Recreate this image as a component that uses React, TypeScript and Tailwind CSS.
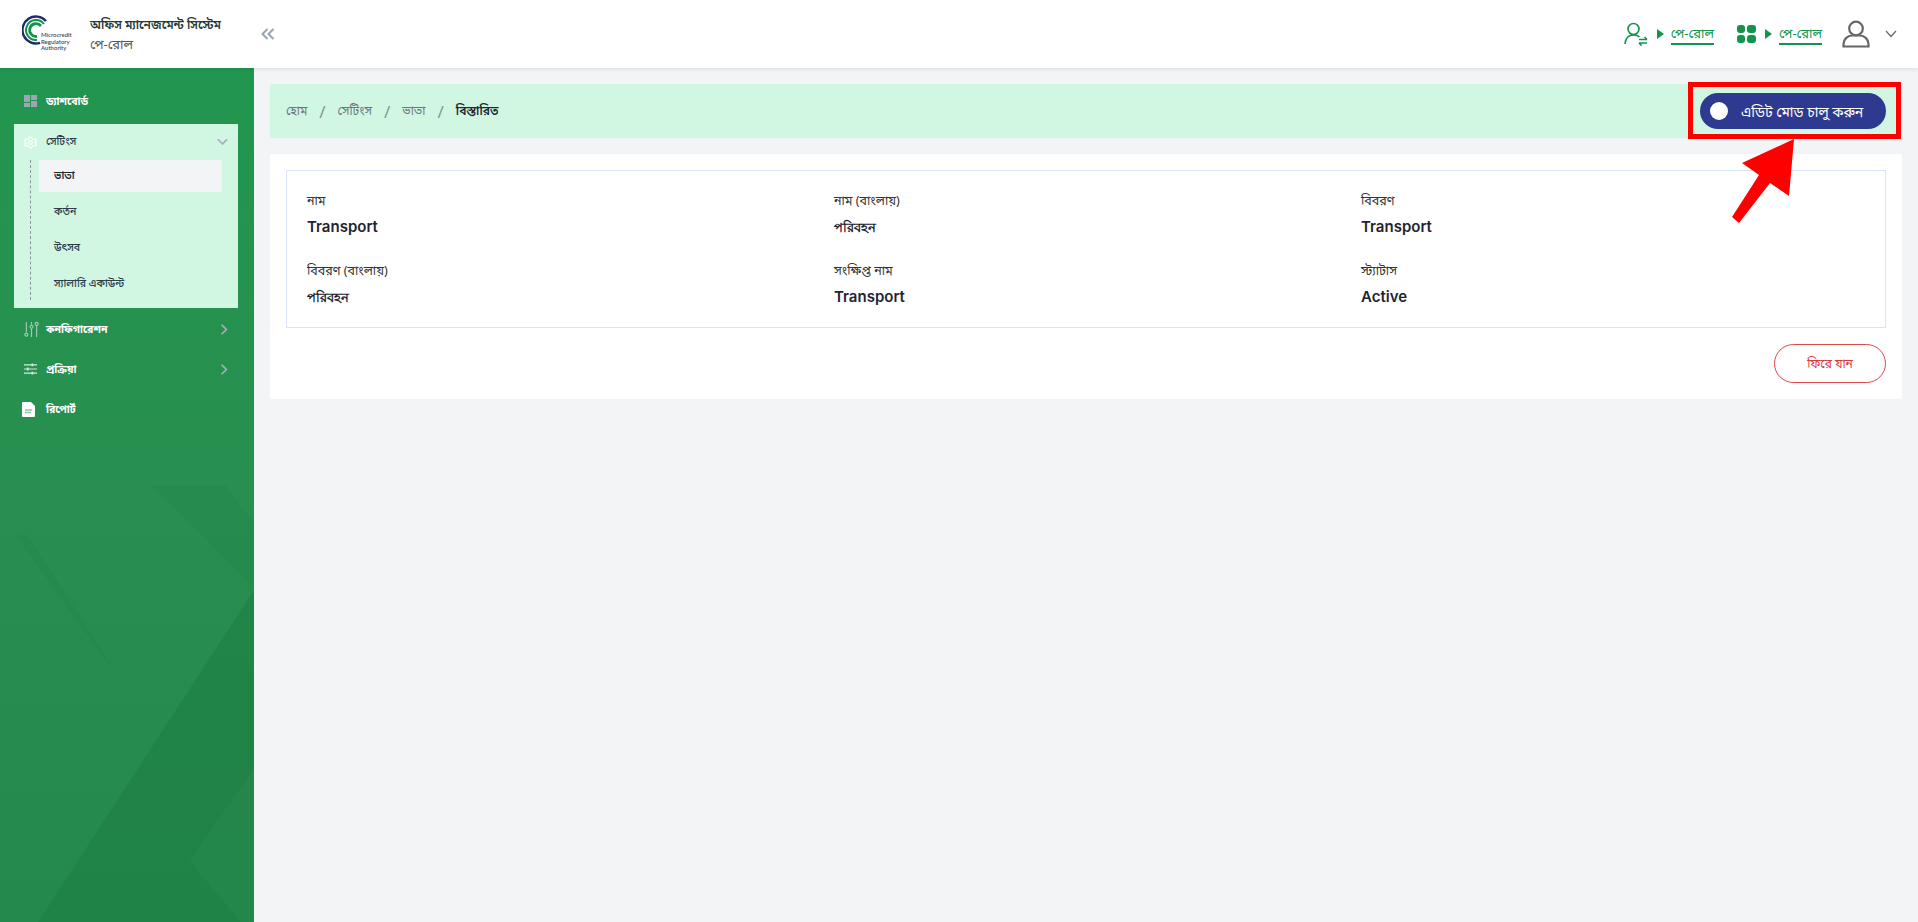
const font = "font-['Noto_Sans','Noto_Sans_Bengali','Lohit_Bengali','FreeSans',sans-serif]";

const Logo = () => (
  <div className="relative w-[50px] h-[40px]">
    <svg viewBox="0 0 50 40" className="absolute inset-0 w-full h-full" fill="none">
      <path d="M24 7 A13.500 13.500 0 1 0 18 28.900" stroke="#1c2a6b" strokeWidth="2.400" />
      <path d="M22 10 A10 10 0 1 0 15 26" stroke="#12944c" strokeWidth="2" />
      <path d="M19 12 A6.400 6.400 0 1 0 15 22.400" stroke="#12944c" strokeWidth="2.800" />
    </svg>
    <div className="absolute left-[19px] top-[18px] font-['Lato',sans-serif] text-[6px] leading-[6.500px] text-[#3f4a5c] font-semibold whitespace-nowrap">
      <div>Microcredit</div>
      <div>Regulatory</div>
      <div>Authority</div>
    </div>
  </div>
);

const PayrollLink = ({ icon }: { icon: React.ReactNode }) => (
  <div className="flex items-center">
    {icon}
    <svg viewBox="0 0 7 10" className="w-[7px] h-[10px] fill-[#12944c] ml-[9px] mr-[7px]">
      <path d="M0 0 L7 5 L0 10 Z" />
    </svg>
    <span className="text-[13px] leading-[18px] text-[#12944c] border-b-2 border-[#12944c] pb-[1px]">পে-রোল</span>
  </div>
);

const MenuRow = ({ icon, label, chevron }: { icon: React.ReactNode; label: string; chevron?: boolean }) => (
  <div className="h-10 flex items-center pl-[24px] pr-[26px] text-white text-[10.500px] font-bold">
    <span className="w-[22px] flex">{icon}</span>
    <span className="pt-[2px]">{label}</span>
    {chevron && (
      <svg viewBox="0 0 10 14" className="ml-auto w-[8px] h-[13px]" fill="none" stroke="#a9b0bd" strokeWidth="2">
        <path d="M2 1 L8 7 L2 13" />
      </svg>
    )}
  </div>
);

const Field = ({ label, value, bangla }: { label: string; value: string; bangla?: boolean }) => (
  <div>
    <div className="text-[12.500px] leading-[20px] text-[#333]">{label}</div>
    <div className={`mt-[6px] leading-[20px] font-semibold text-[#1f2430] font-['Inter','Noto_Sans',sans-serif] ${bangla ? 'text-[13px]' : 'text-[15px]'}`}>{value}</div>
  </div>
);

const Slash = () => <span className="mx-[12px] text-[17px] leading-none text-[#8a949e]">/</span>;

export default function App() {
  return (
    <div className={`relative h-[922px] w-[1918px] overflow-hidden flex flex-col bg-[#f3f4f6] ${font}`}>
      <header className="relative z-10 h-[68px] shrink-0 bg-white shadow-[0_1px_4px_rgba(0,0,0,0.1)] flex items-center pl-[22px] pr-[21px]">
        <Logo />
        <div className="ml-[18px] w-[130px] whitespace-nowrap">
          <div className="text-[12px] leading-[18px] font-semibold text-[#1f3a3a]">অফিস ম্যানেজমেন্ট সিস্টেম</div>
          <div className="mt-[1px] text-[13px] leading-[18px] text-[#555]">পে-রোল</div>
        </div>
        <svg viewBox="0 0 14 12" className="ml-[41px] w-[14px] h-[12px]" fill="none" stroke="#9aa3b2" strokeWidth="2">
          <path d="M6.500 1 L1.500 6 L6.500 11 M12.500 1 L7.500 6 L12.500 11" />
        </svg>
        <div className="ml-auto flex items-center">
          <PayrollLink
            icon={
              <svg viewBox="0 0 24 24" className="w-[24px] h-[24px]" fill="none" stroke="#12944c" strokeWidth="1.600">
                <circle cx="9.500" cy="7" r="5.500" />
                <path d="M1 22 C1.500 16 5 13 9.500 13 C12 13 14 13.500 15.500 15" />
                <path d="M15 17.500 H23 M20.500 15 L23 17.500 M23 21 H15 M17.500 23.500 L15 21" />
              </svg>
            }
          />
          <div className="w-[23px]" />
          <PayrollLink
            icon={
              <div className="grid grid-cols-2 gap-[2px] w-[19px]">
                <span className="h-[8px] rounded-[3px] bg-[#12944c]" />
                <span className="h-[8px] rounded-[3px] bg-[#12944c]" />
                <span className="h-[8px] rounded-[3px] bg-[#12944c]" />
                <span className="h-[8px] rounded-[3px] bg-[#12944c]" />
              </div>
            }
          />
          <svg viewBox="0 0 28 28" className="ml-[20px] w-[28px] h-[28px]" fill="none" stroke="#666" strokeWidth="2.200">
            <circle cx="14" cy="8.500" r="6.800" />
            <path d="M1.500 26.500 V24 C1.500 19 6 15.500 10 15.500 H18 C22 15.500 26.500 19 26.500 24 V26.500 Z" />
          </svg>
          <svg viewBox="0 0 12 8" className="ml-[15px] w-[12px] h-[8px]" fill="none" stroke="#666" strokeWidth="1.200">
            <path d="M1 1 L6 6.500 L11 1" />
          </svg>
        </div>
      </header>

      <div className="flex flex-1 min-h-0">
        <aside className="relative w-[254px] shrink-0 bg-gradient-to-b from-[#21964f] via-[#288f50] to-[#248a4c] pt-[13px]">
          <svg viewBox="0 0 254 854" preserveAspectRatio="none" className="absolute inset-0 w-full h-full">
            <polygon points="254,522 38,854 254,854" fill="#1c7a41" opacity="0.45" />
            <polygon points="254,700 190,793 254,870" fill="#2a9055" opacity="0.3" />
            <polygon points="15,467 28,467 120,610 100,585" fill="#1c7a41" opacity="0.12" />
            <polygon points="150,417 225,417 254,455 254,520" fill="#1c7a41" opacity="0.15" />
          </svg>
          <div className="relative">
            <div className="mb-[3px]">
              <MenuRow
                label="ড্যাশবোর্ড"
                icon={
                  <div className="grid grid-cols-2 gap-[1px] w-[13px] h-[12px]">
                    <span className="h-[7px] bg-[#9fa4b4]" />
                    <span className="h-[5px] bg-[#9fa4b4]" />
                    <span className="h-[4px] bg-[#9fa4b4]" />
                    <span className="h-[6px] -mt-[2px] bg-[#9fa4b4]" />
                  </div>
                }
              />
            </div>
            <div className="relative ml-[14px] mr-[16px] h-[184px] bg-[#d1f7e2] text-[#333]">
              <div className="h-[36px] flex items-center pl-[10px] pr-[10px] text-[10.500px] font-medium text-[#2a3b4a]">
                <svg viewBox="0 0 24 24" className="w-[13px] h-[13px] mr-[9px]" fill="none" stroke="#fff" strokeWidth="2">
                  <circle cx="12" cy="12" r="3.500" />
                  <path d="M10 2 H14 L15 5 L18 6.500 L21 5.500 L23 9 L20.500 11 V13 L23 15 L21 18.500 L18 17.500 L15 19 L14 22 H10 L9 19 L6 17.500 L3 18.500 L1 15 L3.500 13 V11 L1 9 L3 5.500 L6 6.500 L9 5 Z" />
                </svg>
                <span>সেটিংস</span>
                <svg viewBox="0 0 14 10" className="ml-auto w-[11px] h-[8px]" fill="none" stroke="#a9b0bd" strokeWidth="2.200">
                  <path d="M1 1.500 L7 7.500 L13 1.500" />
                </svg>
              </div>
              <div className="absolute left-[16px] top-[36px] h-[140px] border-l border-dashed border-[#8a93a6]" />
              <div className="ml-[25px] mr-[16px] flex flex-col gap-[4px]">
                <div className="h-[32px] flex items-center pl-[15px] bg-[#f3f4f6] text-[10.500px] font-semibold text-[#1d2733]">ভাতা</div>
                <div className="h-[32px] flex items-center pl-[15px] text-[10.500px] font-medium text-[#2a3b4a]">কর্তন</div>
                <div className="h-[32px] flex items-center pl-[15px] text-[10.500px] font-medium text-[#2a3b4a]">উৎসব</div>
                <div className="h-[32px] flex items-center pl-[15px] text-[10.500px] font-medium text-[#2a3b4a]">স্যালারি একাউন্ট</div>
              </div>
            </div>
            <div className="mt-[1px]">
              <MenuRow
                label="কনফিগারেশন"
                chevron
                icon={
                  <svg viewBox="0 0 16 18" className="w-[15px] h-[17px]" fill="none" stroke="#a9c9b6" strokeWidth="1.200">
                    <path d="M2.500 1 V12 M8 8 V17 M8 1 V4 M13.500 5 V17" />
                    <circle cx="2.500" cy="14.500" r="1.600" />
                    <circle cx="8" cy="6" r="1.600" />
                    <circle cx="13.500" cy="3" r="1.600" />
                  </svg>
                }
              />
              <MenuRow
                label="প্রক্রিয়া"
                chevron
                icon={
                  <svg viewBox="0 0 14 12" className="w-[13px] h-[12px]" fill="none" stroke="#d5eadc" strokeWidth="1.200">
                    <path d="M0 1.500 H14 M0 6 H14 M0 10.500 H14" />
                    <path d="M9 0 V3 M4 4.500 V7.500 M9 9 V12" strokeWidth="1.800" />
                  </svg>
                }
              />
              <MenuRow
                label="রিপোর্ট"
                icon={
                  <svg viewBox="0 0 13 15" className="w-[13px] h-[15px] -ml-[2px]">
                    <path d="M1 0 H9 L13 4 V14 a1 1 0 0 1 -1 1 H1 a1 1 0 0 1 -1 -1 V1 a1 1 0 0 1 1 -1 Z" fill="#fff" />
                    <path d="M3 8 H10 M3 10.500 H9" stroke="#8fc4a4" strokeWidth="1.300" />
                  </svg>
                }
              />
            </div>
          </div>
        </aside>

        <main className="flex-1 pt-[16px] pl-[16px] pr-[16px]">
          <div className="h-[54px] rounded-[2px] bg-[#d1f7e2] flex items-center pl-[16px] pr-[16px] text-[12px]">
            <span className="text-[#6b7580]">হোম</span>
            <Slash />
            <span className="text-[#6b7580]">সেটিংস</span>
            <Slash />
            <span className="text-[#6b7580]">ভাতা</span>
            <Slash />
            <span className="font-semibold text-[#1d2733]">বিস্তারিত</span>
            <div className="ml-auto w-[186px] h-[36px] rounded-full bg-[#2d3a8f] flex items-center pl-[10px]">
              <span className="w-[18px] h-[18px] rounded-full bg-white" />
              <span className="ml-[13px] text-[14px] text-white whitespace-nowrap">এডিট মোড চালু করুন</span>
            </div>
          </div>
          <div className="mt-[16px] h-[245px] rounded-[2px] bg-white p-[16px]">
            <div className="h-[158px] border border-[#d8e5f7] pl-[20px] pt-[20px] grid grid-cols-[527px_527px_1fr] grid-rows-[70px_57px]">
              <Field label="নাম" value="Transport" />
              <Field label="নাম (বাংলায়)" value="পরিবহন" bangla />
              <Field label="বিবরণ" value="Transport" />
              <Field label="বিবরণ (বাংলায়)" value="পরিবহন" bangla />
              <Field label="সংক্ষিপ্ত নাম" value="Transport" />
              <Field label="স্ট্যাটাস" value="Active" />
            </div>
            <div className="mt-[16px] flex justify-end">
              <div className="w-[112px] h-[39px] rounded-full border border-[#e0474c] flex items-center justify-center text-[12px] text-[#d8393f]">ফিরে যান</div>
            </div>
          </div>
        </main>
      </div>

      {/* annotation drawn over the screenshot */}
      <div className="absolute left-[1688px] top-[82px] w-[213px] h-[57px] border-[5px] border-[#ff0000]" />
      <svg className="absolute left-[1725px] top-[135px] w-[75px] h-[92px]" viewBox="1725 135 75 92">
        <polygon points="1794,139 1742,163 1759,175 1732,217 1739,223 1770,183 1789,196" fill="#ff0000" />
      </svg>
    </div>
  );
}
